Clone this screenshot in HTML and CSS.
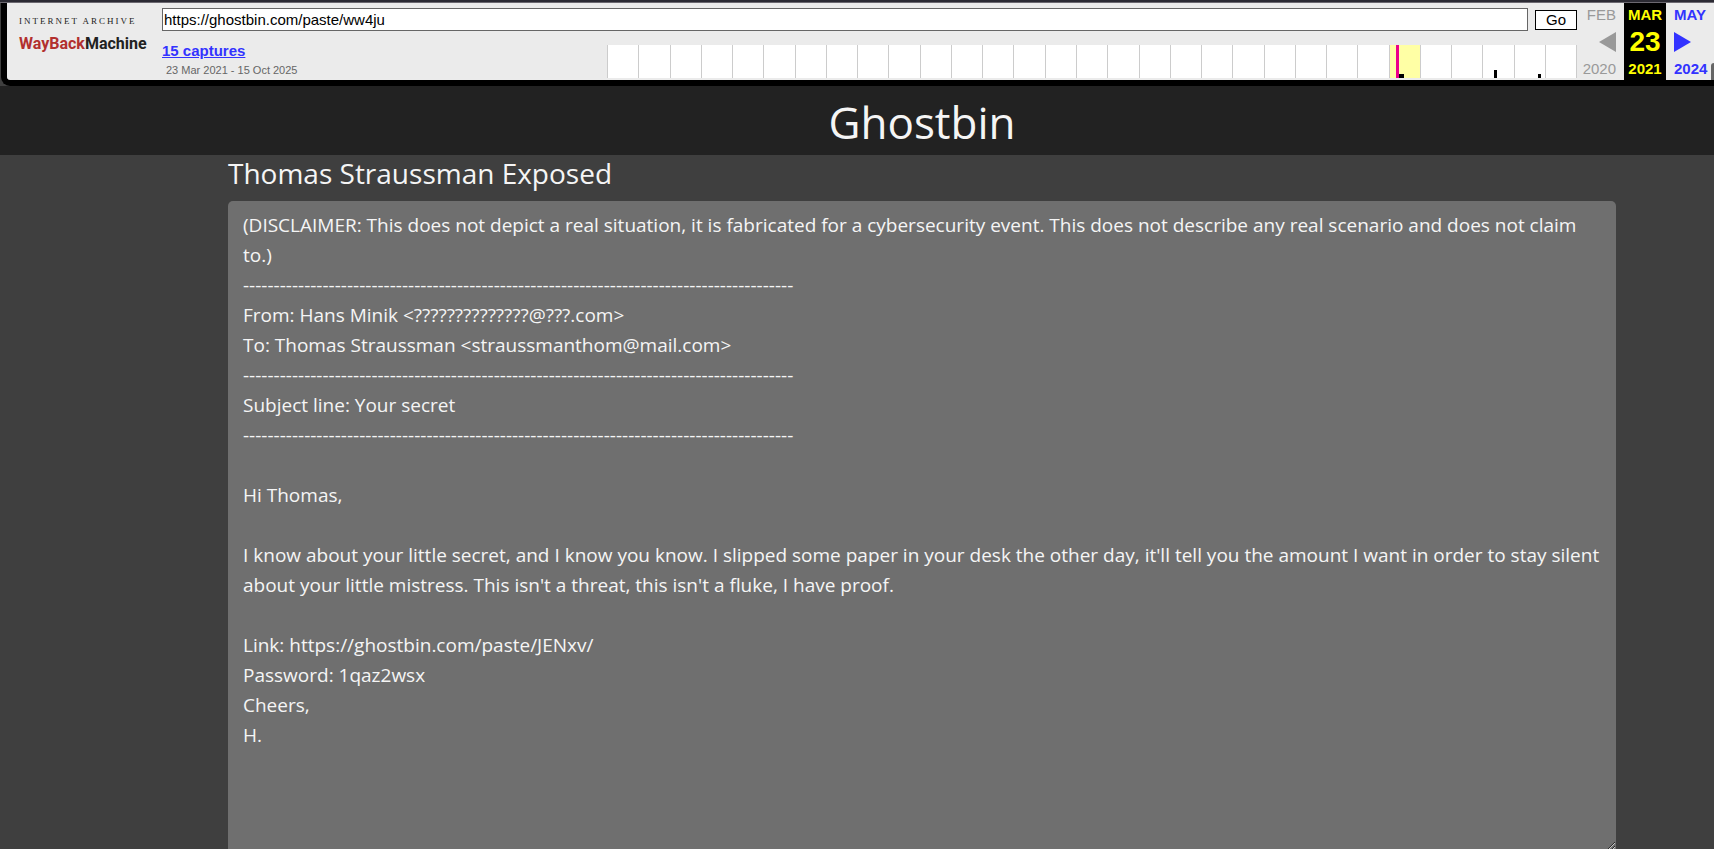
FILE: index.html
```html
<!DOCTYPE html>
<html lang="en">
<head>
    <meta charset="utf-8">
    <meta name="viewport" content="width=device-width, initial-scale=1.0">
    <title>Ghostbin</title>
    <link rel="stylesheet" href="styles.css">
</head>
<body>
<div class="wm-edge"></div>
<div class="wm">
    <a class="wm-logo" href="#">
        <span class="wm-org">INTERNET ARCHIVE</span>
        <span class="wm-name"><span class="wm-red">WayBack</span>Machine</span>
    </a>
    <div class="wm-main">
        <form class="wm-form">
            <input class="wm-url" type="text" aria-label="URL" value="https://ghostbin.com/paste/ww4ju">
            <button class="wm-go" type="button">Go</button>
        </form>
        <div class="wm-row">
            <div class="wm-captures">
                <a href="#">15 captures</a>
                <span class="wm-range">23 Mar 2021 - 15 Oct 2025</span>
            </div>
            <!-- one cell per year, 1996 - 2026 -->
            <div class="wm-years">
                <i></i><i></i><i></i><i></i><i></i><i></i><i></i><i></i><i></i><i></i>
                <i></i><i></i><i></i><i></i><i></i><i></i><i></i><i></i><i></i><i></i>
                <i></i><i></i><i></i><i></i><i></i><i class="current"><b class="now"></b><b class="bar wide"></b></i><i></i><i></i><i class="tall"><b class="bar"></b></i><i class="short"><b class="bar"></b></i><i></i>
            </div>
        </div>
    </div>
    <div class="wm-nav">
        <div class="wm-col prev">
            <span>FEB</span>
            <svg width="17" height="20" viewBox="0 0 17 20"><path d="M17 0v20L0 10z" fill="#999"/></svg>
            <span>2020</span>
        </div>
        <div class="wm-col here">
            <span>MAR</span>
            <span class="day">23</span>
            <span>2021</span>
        </div>
        <div class="wm-col next">
            <a href="#">MAY</a>
            <svg width="17" height="20" viewBox="0 0 17 20"><path d="M0 0v20l17-10z" fill="#33f"/></svg>
            <a href="#">2024</a>
        </div>
        <div class="wm-tab"></div>
    </div>
</div>

<header class="top">
    <h1>Ghostbin</h1>
</header>
<main class="page">
    <div class="container">
        <h2><label for="paste">Thomas Straussman Exposed</label></h2>
        <textarea class="paste" id="paste" rows="21" spellcheck="false" readonly>(DISCLAIMER: This does not depict a real situation, it is fabricated for a cybersecurity event. This does not describe any real scenario and does not claim to.)
------------------------------------------------------------------------------------------
From: Hans Minik &lt;??????????????@???.com&gt;
To: Thomas Straussman &lt;straussmanthom@mail.com&gt;
------------------------------------------------------------------------------------------
Subject line: Your secret
------------------------------------------------------------------------------------------

Hi Thomas,

I know about your little secret, and I know you know. I slipped some paper in your desk the other day, it'll tell you the amount I want in order to stay silent about your little mistress. This isn't a threat, this isn't a fluke, I have proof.

Link: https://ghostbin.com/paste/JENxv/
Password: 1qaz2wsx
Cheers,
H.</textarea>
    </div>
</main>
</body>
</html>
```

FILE: styles.css
```css
* {
    box-sizing: border-box;
}

html, body, h1, h2 {
    margin: 0;
    padding: 0;
}

body {
    background: #3f3f3f;
    color: #f5f5f5;
    font: 19px/30px "Open Sans", "Noto Sans", sans-serif;
    overflow: hidden;
}

/* wayback toolbar */
.wm-edge {
    height: 3px;
    background: #2b2a33;
    border-bottom: 1px solid #6b6870;
}

.wm {
    display: flex;
    height: 83px;
    margin-left: 1px;
    background: #ebebeb;
    border: solid #000;
    border-width: 0 0 6px 6px;
    border-bottom-left-radius: 9px;
    color: #666;
    font: 15px/18px "Liberation Sans", Arial, sans-serif;
}

.wm-logo {
    display: flex;
    flex-direction: column;
    width: 155px;
    padding: 12px 0 0 12px;
    color: #222;
    text-decoration: none;
    white-space: nowrap;
}

.wm-org {
    font: 9px/12px "Liberation Serif", serif;
    letter-spacing: 2px;
}

.wm-name {
    font: bold 16px/34px Roboto, "Liberation Sans", sans-serif;
}

.wm-red {
    color: #b2302f;
}

.wm-main {
    flex: 1;
    padding-top: 5px;
}

.wm-form {
    display: flex;
    align-items: center;
    gap: 7px;
}

.wm-url {
    flex: 1;
    height: 23px;
    padding: 0 1px;
    background: #fff;
    border: 1px solid #666;
    color: #000;
    font: inherit;
}

.wm-go {
    width: 42px;
    height: 20px;
    padding: 0;
    background: #fff;
    border: 1px solid #000;
    color: #000;
    font: inherit;
}

.wm-row {
    display: flex;
    margin-top: 14px;
}

.wm-captures {
    display: flex;
    flex-direction: column;
    width: 445px;
    margin-top: -3px;
}

.wm-captures a {
    color: #33f;
    font-weight: bold;
}

.wm-range {
    padding-left: 4px;
    font-size: 11px;
    line-height: 20px;
}

.wm-years {
    display: flex;
    flex: 1;
    height: 33px;
    background: #fff;
    border-right: 1px solid #ccc;
}

.wm-years i {
    position: relative;
    flex: 1;
    border-left: 1px solid #ccc;
}

.wm-years .current {
    background: #ffffa5;
}

.wm-years b {
    position: absolute;
    bottom: 0;
}

.now {
    left: 6px;
    width: 3px;
    height: 33px;
    background: #ec008c;
}

.bar {
    left: 11px;
    width: 3px;
    height: 4px;
    background: #000;
}

.bar.wide {
    left: 9px;
    width: 5px;
}

.tall .bar {
    height: 8px;
}

.short .bar {
    left: 23px;
}

.wm-nav {
    display: flex;
}

.wm-col {
    display: flex;
    flex-direction: column;
    justify-content: space-between;
    padding: 3px 0 2px;
}

.prev {
    align-items: flex-end;
    width: 47px;
    padding-right: 8px;
    color: #999;
}

.here {
    align-items: center;
    width: 42px;
    background: #000;
    color: #ff0;
    font-weight: bold;
}

.day {
    font-size: 28px;
}

.next {
    width: 45px;
    padding-left: 8px;
    font-weight: bold;
}

.next a {
    color: #33f;
    text-decoration: none;
}

.wm-tab {
    align-self: flex-end;
    width: 3px;
    height: 17px;
    background: #666;
    border-top-left-radius: 3px;
}

/* ghostbin */
.top {
    padding: 6px 0 3px 130px;
    background: #222;
    text-align: center;
}

.top h1 {
    font-size: 44px;
    font-weight: 400;
    line-height: 60px;
}

.page {
    padding-left: 130px;
}

.container {
    max-width: 1388px;
    margin: 0 auto;
}

.container h2 {
    margin-bottom: 10px;
    font-size: 28px;
    font-weight: 400;
    line-height: 36px;
}

.paste {
    display: block;
    width: 100%;
    padding: 9px 15px 10px;
    background: #6f6f6f;
    border: 0;
    border-radius: 5px 5px 0 0;
    color: #f5f5f5;
    font: inherit;
    resize: both;
    overflow: hidden;
}
```
